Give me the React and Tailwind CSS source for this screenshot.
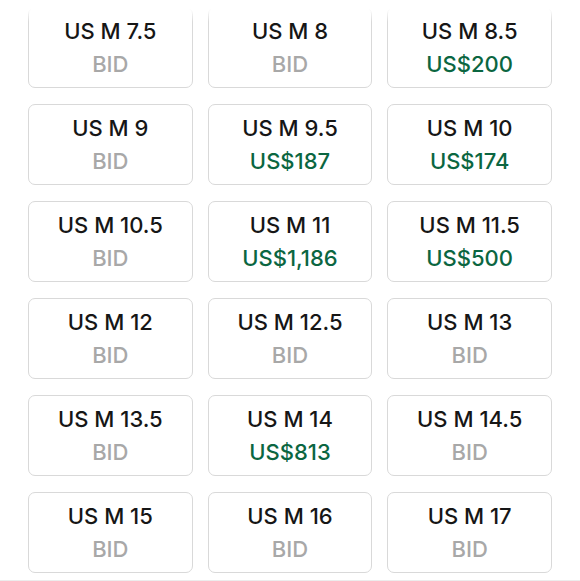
import React from 'react';

const SIZES = [
  ['7.5', null], ['8', null], ['8.5', 'US$200'],
  ['9', null], ['9.5', 'US$187'], ['10', 'US$174'],
  ['10.5', null], ['11', 'US$1,186'], ['11.5', 'US$500'],
  ['12', null], ['12.5', null], ['13', null],
  ['13.5', null], ['14', 'US$813'], ['14.5', null],
  ['15', null], ['16', null], ['17', null],
];

function SizeCard({ size, price }) {
  return (
    <button className="h-[81px] rounded-[7px] border-[1.5px] border-[#d9d9d9] bg-white flex flex-col items-center justify-center gap-[6px]">
      <span className="text-[22px] leading-[27px] font-medium text-[#161616]">US M {size}</span>
      {price ? (
        <span className="text-[22px] leading-[27px] font-medium text-[#0b6641]">{price}</span>
      ) : (
        <span className="text-[22px] leading-[27px] font-medium text-[#a8a8a8]">BID</span>
      )}
    </button>
  );
}

export default function App() {
  return (
    <div className="relative h-[581px] bg-white overflow-hidden font-['Inter',sans-serif] flex flex-col">
      <div className="grid grid-cols-3 gap-x-[15px] gap-y-[16px] px-[28px] pt-[7px]">
        {SIZES.map(([s, p]) => <SizeCard key={s} size={s} price={p} />)}
      </div>
      <div className="mt-auto border-t border-[#ececec]" />
      <div className="absolute inset-x-0 top-0 h-[22px] bg-gradient-to-b from-white from-40% to-white/0" />
    </div>
  );
}
